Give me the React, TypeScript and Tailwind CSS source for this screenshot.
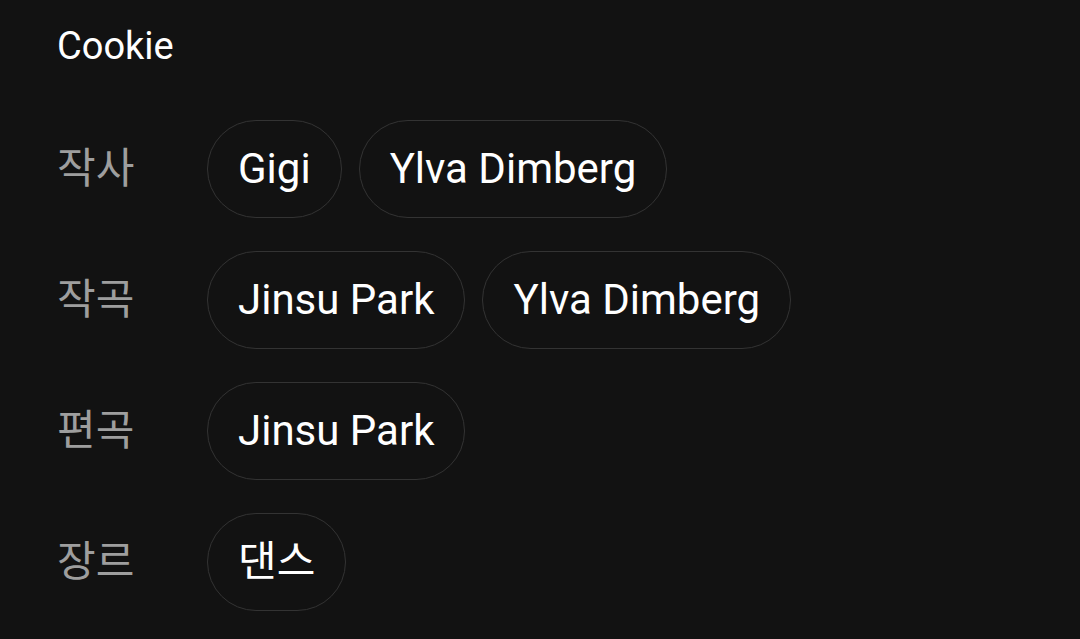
import React from 'react';

const rows: { label: string; values: string[] }[] = [
  { label: '작사', values: ['Gigi', 'Ylva Dimberg'] },
  { label: '작곡', values: ['Jinsu Park', 'Ylva Dimberg'] },
  { label: '편곡', values: ['Jinsu Park'] },
  { label: '장르', values: ['댄스'] },
];

const Chip = ({ text }: { text: string }) => (
  <div className="h-[98px] px-[30px] flex items-center rounded-full border border-[#333333] text-[42px] leading-none text-white">
    {text}
  </div>
);

export default function App() {
  return (
    <div
      className="w-[1080px] h-[639px] overflow-hidden bg-[#121212] pl-[57px] pt-[23px]"
      style={{ fontFamily: 'Roboto, "Noto Sans CJK KR", sans-serif' }}
    >
      <div className="text-[38px] leading-[46px] text-white">Cookie</div>
      <div className="mt-[51px] flex flex-col gap-[33px]">
        {rows.map((row) => (
          <div key={row.label} className="flex items-center">
            <div className="w-[150px] text-[42px] leading-none text-[#9e9e9e]">{row.label}</div>
            <div className="flex gap-[17px]">
              {row.values.map((v, i) => (
                <Chip key={i} text={v} />
              ))}
            </div>
          </div>
        ))}
      </div>
    </div>
  );
}
